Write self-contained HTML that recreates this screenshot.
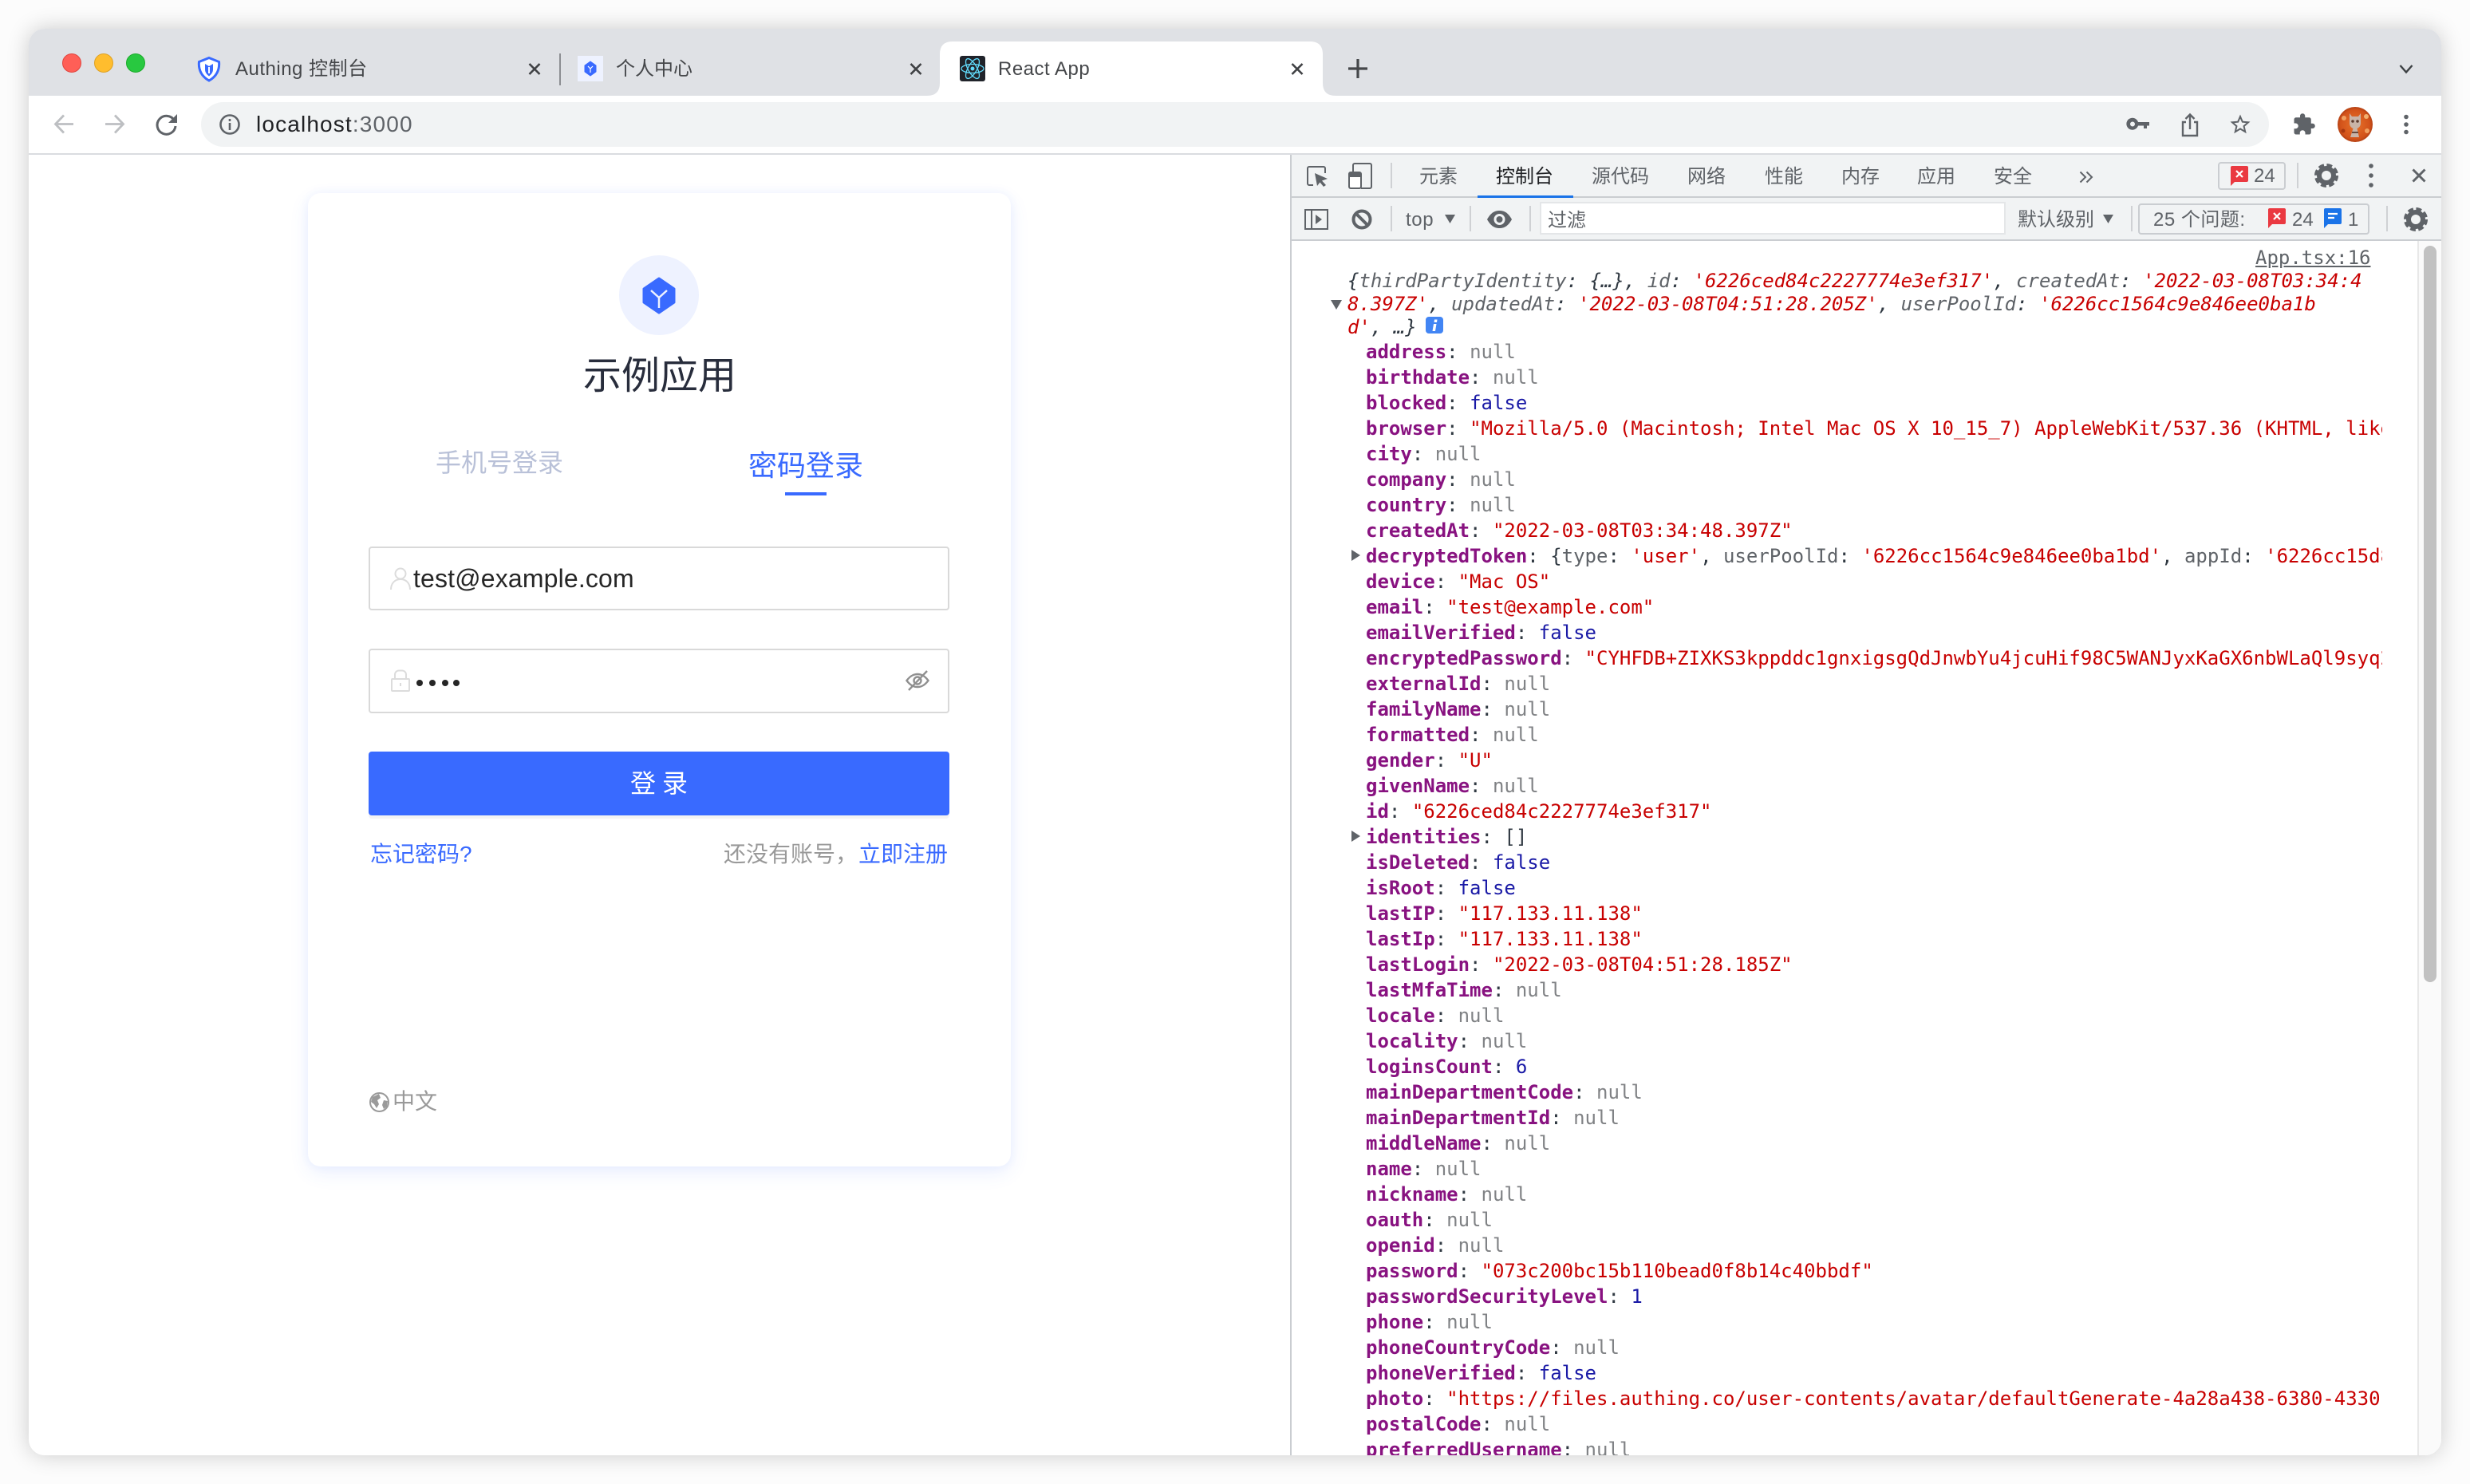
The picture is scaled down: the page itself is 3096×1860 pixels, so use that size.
<!DOCTYPE html>
<html><head><meta charset="utf-8"><title>React App</title>
<style>
*{box-sizing:border-box}
html,body{margin:0;padding:0;width:3096px;height:1860px;overflow:hidden;background:#fcfcfc}
body{font-family:"Liberation Sans","Noto Sans CJK SC",sans-serif;position:relative}
#w{position:absolute;left:36px;top:36px;width:3024px;height:1788px;border-radius:20px;box-shadow:0 0 28px rgba(0,0,0,.2)}
#c{position:absolute;left:0;top:0;width:3096px;height:1860px;clip-path:inset(36px 36px 36px 36px round 20px)}
.a{position:absolute}
.t{position:absolute;white-space:nowrap;line-height:40px;height:40px}
svg{position:absolute;overflow:visible}
.tb{color:#5f6368;font-size:24px}
.sep{position:absolute;width:2px;background:#cfd1d4}
#rows{position:absolute;left:1712px;top:425px;width:1274px;height:1400px;overflow:hidden;font:24px/32px "DejaVu Sans Mono","Liberation Mono",monospace;color:#303942}
#rows div{height:32px;white-space:nowrap;overflow:hidden}
.k{color:#881280;font-weight:bold}.n{color:#808285}.s{color:#c80000}.b{color:#1a1aa6}.g{color:#5f6368}
.h{position:absolute;left:1689px;font:italic 24px/29px "DejaVu Sans Mono","Liberation Mono",monospace;color:#303942;white-space:nowrap}
</style></head><body>
<div id="w"></div>
<div id="c">
<!-- frame -->
<div class="a" style="left:36px;top:36px;width:3024px;height:84px;background:#dfe1e5"></div>
<div class="a" style="left:36px;top:120px;width:3024px;height:72px;background:#fff"></div>
<div class="a" style="left:36px;top:192px;width:3024px;height:2px;background:#dadce0"></div>
<div class="a" style="left:36px;top:194px;width:3024px;height:1630px;background:#fff"></div>
<div class="a" style="left:252px;top:128px;width:2592px;height:56px;background:#f1f3f4;border-radius:28px"></div>

<!-- lights -->
<div class="a" style="left:78px;top:67px;width:24px;height:24px;border-radius:50%;background:#ff5f57;border:1px solid #e0443e"></div>
<div class="a" style="left:118px;top:67px;width:24px;height:24px;border-radius:50%;background:#ffbd2e;border:1px solid #dea123"></div>
<div class="a" style="left:158px;top:67px;width:24px;height:24px;border-radius:50%;background:#28c840;border:1px solid #1aab29"></div>

<!-- tab 1 -->
<svg style="left:247px;top:71px" width="30" height="31" viewBox="0 0 30 31"><path d="M15 1.500L27.500 6.500C28.500 16 24.500 25 15 30C5.500 25 1.500 16 2.500 6.500Z" fill="#fff" stroke="#396aff" stroke-width="3"/><path d="M10 9L15 12L20 9V16C20 20 17.500 22.500 15 24.500C12.500 22.500 10 20 10 16Z" fill="#396aff"/><path d="M15 13V21" stroke="#fff" stroke-width="2"/></svg>
<div class="t" style="left:295px;top:67px;font-size:24px;color:#45474a;letter-spacing:.5px">Authing 控制台</div>
<svg style="left:662px;top:79px" width="16" height="15" viewBox="0 0 16 15"><path d="M1.500 1L14.500 14M14.500 1L1.500 14" stroke="#3f4144" stroke-width="2.600"/></svg>
<div class="a" style="left:701px;top:67px;width:2px;height:40px;background:#8c8e92"></div>
<!-- tab 2 -->
<div class="a" style="left:724px;top:70px;width:32px;height:32px;background:#eef2ff"></div>
<svg style="left:732px;top:76px" width="16" height="20" viewBox="0 0 16 20"><path d="M8 1L15 6V14L8 19L1 14V6Z" fill="#396aff" stroke="#396aff" stroke-linejoin="round"/><path d="M5 7L8 10L11 7M8 10V15" fill="none" stroke="#fff" stroke-width="1.200"/></svg>
<div class="t" style="left:772px;top:67px;font-size:24px;color:#45474a">个人中心</div>
<svg style="left:1140px;top:79px" width="16" height="15" viewBox="0 0 16 15"><path d="M1.500 1L14.500 14M14.500 1L1.500 14" stroke="#3f4144" stroke-width="2.600"/></svg>
<!-- active tab -->
<svg style="left:0;top:0" width="1700" height="130"><path d="M1162 120Q1178 120 1178 104V68Q1178 52 1194 52H1642Q1658 52 1658 68V104Q1658 120 1674 120Z" fill="#fff"/></svg>
<svg style="left:1203px;top:70px" width="32" height="32" viewBox="0 0 32 32"><rect width="32" height="32" rx="3" fill="#20232a"/><g fill="none" stroke="#61dafb" stroke-width="1.300"><ellipse cx="16" cy="16" rx="14" ry="5.500"/><ellipse cx="16" cy="16" rx="14" ry="5.500" transform="rotate(60 16 16)"/><ellipse cx="16" cy="16" rx="14" ry="5.500" transform="rotate(120 16 16)"/></g><circle cx="16" cy="16" r="2.500" fill="#61dafb"/></svg>
<div class="t" style="left:1251px;top:67px;font-size:24px;color:#45474a;letter-spacing:.5px">React App</div>
<svg style="left:1618px;top:79px" width="16" height="15" viewBox="0 0 16 15"><path d="M1.500 1L14.500 14M14.500 1L1.500 14" stroke="#3f4144" stroke-width="2.600"/></svg>
<svg style="left:1690px;top:74px" width="24" height="24" viewBox="0 0 24 24"><path d="M12 0V24M0 12H24" stroke="#45474a" stroke-width="3.200"/></svg>
<svg style="left:3007px;top:81px" width="18" height="11" viewBox="0 0 18 11"><path d="M1.500 1L9 9.500L16.500 1" fill="none" stroke="#3c4043" stroke-width="2.400"/></svg>

<!-- nav -->
<svg style="left:67px;top:143px" width="26" height="25" viewBox="0 0 26 25"><path d="M25 12.500H3M13 1.500L2.500 12.500L13 23.500" fill="none" stroke="#bdbfc2" stroke-width="2.800"/></svg>
<svg style="left:131px;top:143px" width="26" height="25" viewBox="0 0 26 25"><path d="M1 12.500H23M13 1.500L23.500 12.500L13 23.500" fill="none" stroke="#bdbfc2" stroke-width="2.800"/></svg>
<svg style="left:195px;top:143px" width="28" height="26" viewBox="0 0 28 26"><path d="M23.500 8A11.500 11.500 0 1 0 25 15" fill="none" stroke="#5f6368" stroke-width="3"/><path d="M27 0V11H16Z" fill="#5f6368"/></svg>
<svg style="left:275px;top:143px" width="26" height="26" viewBox="0 0 26 26"><circle cx="13" cy="13" r="11.500" fill="none" stroke="#5f6368" stroke-width="2.600"/><rect x="11.700" y="6" width="2.600" height="3" fill="#5f6368"/><rect x="11.700" y="11" width="2.600" height="9" fill="#5f6368"/></svg>
<div class="t" style="left:321px;top:136px;font-size:28px;color:#202124;letter-spacing:1.15px">localhost<span style="color:#5f6368">:3000</span></div>
<svg style="left:2666px;top:147px" width="28" height="18" viewBox="0 0 28 18"><path d="M14 6H28V10.500H25V14H21V10.500H14A7.500 7.500 0 1 1 14 6ZM7 5.500A3 3 0 1 0 7 11.500A3 3 0 1 0 7 5.500Z" fill="#5f6368" fill-rule="evenodd"/></svg>
<svg style="left:2733px;top:142px" width="24" height="30" viewBox="0 0 24 30"><path d="M7 11H3V28H21V11H17M12 20V2M6.500 7L12 1.500L17.500 7" fill="none" stroke="#5f6368" stroke-width="2.400"/></svg>
<svg style="left:2793px;top:141px" width="30" height="30" viewBox="0 0 24 24"><path d="M22 9.240l-7.190-.62L12 2 9.190 8.630 2 9.240l5.460 4.730L5.820 21 12 17.270 18.180 21l-1.630-7.030L22 9.240zM12 15.400l-3.760 2.270 1-4.280-3.320-2.880 4.380-.38L12 6.100l1.710 4.040 4.380.38-3.320 2.880 1 4.280L12 15.400z" fill="#5f6368"/></svg>
<svg style="left:2873px;top:141px" width="30" height="30" viewBox="0 0 24 24"><path d="M20.500 11H19V7c0-1.100-.9-2-2-2h-4V3.500C13 2.120 11.880 1 10.500 1S8 2.120 8 3.500V5H4c-1.100 0-1.990.9-1.990 2v3.800H3.500c1.490 0 2.700 1.210 2.700 2.700s-1.210 2.700-2.700 2.700H2V20c0 1.100.9 2 2 2h3.800v-1.500c0-1.490 1.210-2.700 2.700-2.700 1.490 0 2.700 1.210 2.700 2.700V22H17c1.100 0 2-.9 2-2v-4h1.500c1.380 0 2.500-1.120 2.500-2.500S21.880 11 20.500 11z" fill="#5f6368"/></svg>
<svg style="left:2930px;top:134px" width="44" height="44" viewBox="0 0 44 44"><defs><radialGradient id="av" cx=".5" cy=".5" r=".6"><stop offset="0" stop-color="#e8732a"/><stop offset=".7" stop-color="#d2521a"/><stop offset="1" stop-color="#8f2c0c"/></radialGradient></defs><circle cx="22" cy="22" r="22" fill="url(#av)"/><circle cx="8" cy="14" r="3" fill="#f0a060"/><circle cx="36" cy="12" r="3" fill="#f2b070"/><circle cx="37" cy="30" r="3" fill="#f0a060"/><circle cx="7" cy="30" r="2.500" fill="#a83810"/><path d="M15 8L18 12H26L29 8V20C29 24 27 26 24.500 27L27 38H16L19.500 27C17 26 15 24 15 20Z" fill="#c9b4a8"/><circle cx="19" cy="18" r="1.800" fill="#5b3a2e"/><circle cx="25" cy="18" r="1.800" fill="#5b3a2e"/><path d="M18 32H26" stroke="#6a4a3c" stroke-width="2"/></svg>
<svg style="left:3011px;top:143px" width="10" height="26" viewBox="0 0 10 26"><circle cx="5" cy="3.500" r="2.800" fill="#5f6368"/><circle cx="5" cy="13" r="2.800" fill="#5f6368"/><circle cx="5" cy="22.500" r="2.800" fill="#5f6368"/></svg>

<!-- login card -->
<div class="a" style="left:386px;top:242px;width:881px;height:1220px;background:#fff;border-radius:16px;box-shadow:0 0 12px rgba(57,106,255,.06),0 8px 24px rgba(57,106,255,.1)"></div>
<div class="a" style="left:776px;top:320px;width:100px;height:100px;border-radius:50%;background:#eef2ff"></div>
<svg style="left:805px;top:347px" width="42" height="47" viewBox="0 0 42 47"><path d="M21 2L40 15V32L21 45L2 32V15Z" fill="#396aff" stroke="#396aff" stroke-width="3" stroke-linejoin="round"/><path d="M11 17L21 26L31 17M21 26V39" fill="none" stroke="#eef2ff" stroke-width="2.500"/></svg>
<div class="t" style="left:731px;top:442px;height:60px;line-height:60px;font-size:48px;color:#282d3c">示例应用</div>
<div class="t" style="left:546px;top:560px;font-size:32px;color:#b9c1d8">手机号登录</div>
<div class="t" style="left:938px;top:564px;font-size:36px;color:#396aff">密码登录</div>
<div class="a" style="left:984px;top:617px;width:52px;height:4px;background:#396aff"></div>

<div class="a" style="left:462px;top:685px;width:728px;height:80px;border:2px solid #d9d9d9;border-radius:4px;background:#fff"></div>
<svg style="left:489px;top:711px" width="26" height="28" viewBox="0 0 26 28"><circle cx="13" cy="8" r="6.500" fill="none" stroke="#dcdcdc" stroke-width="2"/><path d="M1 28C1 20 6 15 13 15C20 15 25 20 25 28" fill="none" stroke="#dcdcdc" stroke-width="2"/></svg>
<div class="t" style="left:518px;top:705px;font-size:32px;color:#262626;letter-spacing:.15px">test@example.com</div>

<div class="a" style="left:462px;top:813px;width:728px;height:81px;border:2px solid #d9d9d9;border-radius:4px;background:#fff"></div>
<svg style="left:490px;top:839px" width="24" height="28" viewBox="0 0 24 28"><path d="M5 12V6.500A5 5 0 0 1 10 1.500H14A5 5 0 0 1 19 6.500V12" fill="none" stroke="#dcdcdc" stroke-width="2"/><rect x="1" y="12" width="22" height="15" rx="1" fill="none" stroke="#dcdcdc" stroke-width="2"/><path d="M12 17V21" stroke="#dcdcdc" stroke-width="2"/></svg>
<div class="a" style="left:522px;top:852px;width:8px;height:8px;border-radius:50%;background:#262626"></div>
<div class="a" style="left:538px;top:852px;width:8px;height:8px;border-radius:50%;background:#262626"></div>
<div class="a" style="left:554px;top:852px;width:8px;height:8px;border-radius:50%;background:#262626"></div>
<div class="a" style="left:568px;top:852px;width:8px;height:8px;border-radius:50%;background:#262626"></div>
<svg style="left:1135px;top:840px" width="30" height="26" viewBox="0 0 30 26"><path d="M1.500 13C6 7 10 5 15 5C20 5 24 7 28.500 13C24 19 20 21 15 21C10 21 6 19 1.500 13Z" fill="none" stroke="#8f8f8f" stroke-width="2.400"/><circle cx="15" cy="13" r="4.500" fill="none" stroke="#8f8f8f" stroke-width="2.400"/><path d="M4 25L27 1" stroke="#8f8f8f" stroke-width="2.400"/></svg>

<div class="a" style="left:462px;top:942px;width:728px;height:84px;border-radius:4px;background:#f4f4f4"></div>
<div class="a" style="left:462px;top:942px;width:728px;height:80px;border-radius:4px;background:#396aff"></div>
<div class="t" style="left:790px;top:962px;font-size:32px;color:#fff;letter-spacing:8px">登录</div>
<div class="t" style="left:464px;top:1051px;font-size:28px;color:#396aff">忘记密码?</div>
<div class="t" style="left:907px;top:1051px;font-size:28px;color:#999">还没有账号，</div>
<div class="t" style="left:1076px;top:1051px;font-size:28px;color:#396aff">立即注册</div>
<svg style="left:463px;top:1369px" width="25" height="25" viewBox="0 0 25 25"><circle cx="12.500" cy="12.500" r="11.500" fill="#fff" stroke="#9a9a9a" stroke-width="2"/><path d="M4 6L12 2L14 7L10 10L12 15L9 20L6 15L2 12ZM18 10L23 11L22 18L18 21L16 16Z" fill="#9a9a9a"/></svg>
<div class="t" style="left:492px;top:1361px;font-size:28px;color:#999">中文</div>

<!-- devtools -->
<div class="a" style="left:1617px;top:194px;width:1443px;height:1630px;background:#fff;border-left:2px solid #cacdd1"></div>
<div class="a" style="left:1619px;top:194px;width:1441px;height:52px;background:#f1f3f4"></div>
<div class="a" style="left:1619px;top:246px;width:1441px;height:2px;background:#cacdd1"></div>
<div class="a" style="left:1619px;top:248px;width:1441px;height:52px;background:#f1f3f4"></div>
<div class="a" style="left:1619px;top:300px;width:1441px;height:2px;background:#cacdd1"></div>

<svg style="left:1638px;top:208px" width="27" height="26" viewBox="0 0 27 26"><path d="M8 24H3A2 2 0 0 1 1 22V3A2 2 0 0 1 3 1H21A2 2 0 0 1 23 3V9" fill="none" stroke="#5f6368" stroke-width="2"/><path d="M10 9L26 16L19 18.500L24 24L21 26L16.500 20.500L13 25Z" fill="#5f6368"/></svg>
<svg style="left:1690px;top:204px" width="30" height="33" viewBox="0 0 30 33"><path d="M6 12V3A2 2 0 0 1 8 1H27A2 2 0 0 1 29 3V30A2 2 0 0 1 27 32H16" fill="none" stroke="#5f6368" stroke-width="2"/><rect x="1" y="12" width="15" height="20" rx="2" fill="#fff" stroke="#5f6368" stroke-width="2"/><rect x="1" y="12" width="15" height="6" fill="#5f6368"/></svg>
<div class="sep" style="left:1743px;top:204px;height:32px"></div>
<div class="t tb" style="left:1779px;top:202px">元素</div>
<div class="t" style="left:1875px;top:202px;font-size:24px;color:#202124">控制台</div>
<div class="a" style="left:1852px;top:245px;width:120px;height:3px;background:#1a73e8"></div>
<div class="t tb" style="left:1995px;top:202px">源代码</div>
<div class="t tb" style="left:2115px;top:202px">网络</div>
<div class="t tb" style="left:2212px;top:202px">性能</div>
<div class="t tb" style="left:2308px;top:202px">内存</div>
<div class="t tb" style="left:2403px;top:202px">应用</div>
<div class="t tb" style="left:2499px;top:202px">安全</div>
<svg style="left:2606px;top:214px" width="18" height="16" viewBox="0 0 18 16"><path d="M1.500 1.500L8 8L1.500 14.500M9.500 1.500L16 8L9.500 14.500" fill="none" stroke="#5f6368" stroke-width="2"/></svg>
<div class="a" style="left:2780px;top:203px;width:85px;height:35px;border:2px solid #cacdd1;border-radius:4px"></div>
<svg style="left:2796px;top:208px" width="22" height="25" viewBox="0 0 22 25"><path d="M2 0H20A2 2 0 0 1 22 2V18A2 2 0 0 1 20 20H5L0 25V2A2 2 0 0 1 2 0Z" fill="#ea3941"/><path d="M7 6L15 14M15 6L7 14" stroke="#fff" stroke-width="2.200"/></svg>
<div class="t" style="left:2825px;top:201px;font-size:24px;color:#5f6368">24</div>
<div class="sep" style="left:2879px;top:204px;height:32px"></div>
<svg style="left:2901px;top:205px" width="30" height="30" viewBox="0 0 30 30"><circle cx="15" cy="15" r="9" fill="none" stroke="#5f6368" stroke-width="6"/><circle cx="15" cy="15" r="12.500" fill="none" stroke="#5f6368" stroke-width="5" stroke-dasharray="6.500 3.320"/></svg>
<svg style="left:2967px;top:204px" width="10" height="32" viewBox="0 0 10 32"><circle cx="5" cy="4" r="2.800" fill="#5f6368"/><circle cx="5" cy="16" r="2.800" fill="#5f6368"/><circle cx="5" cy="28" r="2.800" fill="#5f6368"/></svg>
<svg style="left:3023px;top:211px" width="18" height="18" viewBox="0 0 18 18"><path d="M1.500 1.500L16.500 16.500M16.500 1.500L1.500 16.500" stroke="#5f6368" stroke-width="3"/></svg>

<svg style="left:1635px;top:262px" width="30" height="26" viewBox="0 0 30 26"><rect x="1" y="1" width="28" height="24" fill="none" stroke="#5f6368" stroke-width="2"/><path d="M9 1V25" stroke="#5f6368" stroke-width="2"/><path d="M14 7L22 13L14 19Z" fill="#5f6368"/></svg>
<svg style="left:1694px;top:262px" width="26" height="26" viewBox="0 0 26 26"><circle cx="13" cy="13" r="10.500" fill="none" stroke="#5f6368" stroke-width="4"/><path d="M5.500 5.500L20.500 20.500" stroke="#5f6368" stroke-width="4"/></svg>
<div class="sep" style="left:1743px;top:258px;height:32px"></div>
<div class="t" style="left:1762px;top:256px;font-size:24px;color:#5f6368;letter-spacing:.6px">top</div>
<svg style="left:1811px;top:269px" width="13" height="11" viewBox="0 0 13 11"><path d="M0 0H13L6.500 11Z" fill="#5f6368"/></svg>
<div class="sep" style="left:1842px;top:258px;height:32px"></div>
<svg style="left:1864px;top:263px" width="31" height="24" viewBox="0 0 31 24"><path d="M0 12C5 3 10 1 15.500 1C21 1 26 3 31 12C26 21 21 23 15.500 23C10 23 5 21 0 12Z" fill="#5f6368"/><circle cx="15.500" cy="12" r="7" fill="#f1f3f4"/><circle cx="15.500" cy="12" r="4" fill="#5f6368"/></svg>
<div class="sep" style="left:1917px;top:258px;height:32px"></div>
<div class="a" style="left:1930px;top:253px;width:584px;height:41px;background:#fff;border:2px solid #e4e6e8"></div>
<div class="t" style="left:1940px;top:257px;font-size:24px;color:#5f6368">过滤</div>
<div class="t" style="left:2529px;top:256px;font-size:24px;color:#5f6368">默认级别</div>
<svg style="left:2636px;top:269px" width="13" height="11" viewBox="0 0 13 11"><path d="M0 0H13L6.500 11Z" fill="#5f6368"/></svg>
<div class="sep" style="left:2671px;top:258px;height:32px"></div>
<div class="a" style="left:2680px;top:255px;width:290px;height:39px;border:2px solid #cacdd1;border-radius:4px"></div>
<div class="t" style="left:2699px;top:256px;font-size:24px;color:#5f6368;letter-spacing:.5px">25 个问题:</div>
<svg style="left:2843px;top:261px" width="22" height="25" viewBox="0 0 22 25"><path d="M2 0H20A2 2 0 0 1 22 2V18A2 2 0 0 1 20 20H5L0 25V2A2 2 0 0 1 2 0Z" fill="#ea3941"/><path d="M7 6L15 14M15 6L7 14" stroke="#fff" stroke-width="2.200"/></svg>
<div class="t" style="left:2873px;top:256px;font-size:24px;color:#5f6368">24</div>
<svg style="left:2913px;top:261px" width="22" height="25" viewBox="0 0 22 25"><path d="M2 0H20A2 2 0 0 1 22 2V18A2 2 0 0 1 20 20H5L0 25V2A2 2 0 0 1 2 0Z" fill="#1a73e8"/><path d="M5 7H17M5 12H13" stroke="#fff" stroke-width="2.200"/></svg>
<div class="t" style="left:2943px;top:256px;font-size:24px;color:#5f6368">1</div>
<div class="sep" style="left:2991px;top:258px;height:32px"></div>
<svg style="left:3013px;top:260px" width="30" height="30" viewBox="0 0 30 30"><circle cx="15" cy="15" r="9" fill="none" stroke="#5f6368" stroke-width="6"/><circle cx="15" cy="15" r="12.500" fill="none" stroke="#5f6368" stroke-width="5" stroke-dasharray="6.500 3.320"/></svg>

<!-- scrollbar -->
<div class="a" style="left:3030px;top:302px;width:30px;height:1522px;background:#fafafa;border-left:2px solid #e8e8e8"></div>
<div class="a" style="left:3038px;top:308px;width:16px;height:923px;background:#c1c1c1;border-radius:8px"></div>

<!-- console -->
<div class="a" style="left:2827px;top:307px;font:24px/32px 'DejaVu Sans Mono','Liberation Mono',monospace;color:#5f6368;text-decoration:underline;white-space:nowrap">App.tsx:16</div>
<div class="h" style="top:338px">{<span class="g">thirdPartyIdentity</span>: {…}, <span class="g">id</span>: <span class="s">'6226ced84c2227774e3ef317'</span>, <span class="g">createdAt</span>: <span class="s">'2022-03-08T03:34:4</span></div>
<div class="h" style="top:367px"><span class="s">8.397Z'</span>, <span class="g">updatedAt</span>: <span class="s">'2022-03-08T04:51:28.205Z'</span>, <span class="g">userPoolId</span>: <span class="s">'6226cc1564c9e846ee0ba1b</span></div>
<div class="h" style="top:396px"><span class="s">d'</span>, …}</div>
<svg style="left:1668px;top:376px" width="14" height="12" viewBox="0 0 14 12"><path d="M0 0H14L7 12Z" fill="#5f6368"/></svg>
<svg style="left:1787px;top:397px" width="22" height="21" viewBox="0 0 22 21"><rect width="22" height="21" rx="4" fill="#4285f4"/><path d="M11 3.500H14.500L14 7H10.500ZM10 9H13.500L12 18H8.500Z" fill="#fff"/></svg>
<svg style="left:1694px;top:689px" width="11" height="14" viewBox="0 0 11 14"><path d="M0 0L11 7L0 14Z" fill="#5f6368"/></svg>
<svg style="left:1694px;top:1041px" width="11" height="14" viewBox="0 0 11 14"><path d="M0 0L11 7L0 14Z" fill="#5f6368"/></svg>
<div id="rows">
<div><span class="k">address</span>: <span class="n">null</span></div>
<div><span class="k">birthdate</span>: <span class="n">null</span></div>
<div><span class="k">blocked</span>: <span class="b">false</span></div>
<div><span class="k">browser</span>: <span class="s">"Mozilla/5.0 (Macintosh; Intel Mac OS X 10_15_7) AppleWebKit/537.36 (KHTML, like Gecko) Chrome/99.0</span></div>
<div><span class="k">city</span>: <span class="n">null</span></div>
<div><span class="k">company</span>: <span class="n">null</span></div>
<div><span class="k">country</span>: <span class="n">null</span></div>
<div><span class="k">createdAt</span>: <span class="s">"2022-03-08T03:34:48.397Z"</span></div>
<div><span class="k">decryptedToken</span>: {<span class="g">type</span>: <span class="s">'user'</span>, <span class="g">userPoolId</span>: <span class="s">'6226cc1564c9e846ee0ba1bd'</span>, <span class="g">appId</span>: <span class="s">'6226cc15d8c9e846ee0ba1bd'</span></div>
<div><span class="k">device</span>: <span class="s">"Mac OS"</span></div>
<div><span class="k">email</span>: <span class="s">"test@example.com"</span></div>
<div><span class="k">emailVerified</span>: <span class="b">false</span></div>
<div><span class="k">encryptedPassword</span>: <span class="s">"CYHFDB+ZIXKS3kppddc1gnxigsgQdJnwbYu4jcuHif98C5WANJyxKaGX6nbWLaQl9syq2Zx8pQ</span></div>
<div><span class="k">externalId</span>: <span class="n">null</span></div>
<div><span class="k">familyName</span>: <span class="n">null</span></div>
<div><span class="k">formatted</span>: <span class="n">null</span></div>
<div><span class="k">gender</span>: <span class="s">"U"</span></div>
<div><span class="k">givenName</span>: <span class="n">null</span></div>
<div><span class="k">id</span>: <span class="s">"6226ced84c2227774e3ef317"</span></div>
<div><span class="k">identities</span>: []</div>
<div><span class="k">isDeleted</span>: <span class="b">false</span></div>
<div><span class="k">isRoot</span>: <span class="b">false</span></div>
<div><span class="k">lastIP</span>: <span class="s">"117.133.11.138"</span></div>
<div><span class="k">lastIp</span>: <span class="s">"117.133.11.138"</span></div>
<div><span class="k">lastLogin</span>: <span class="s">"2022-03-08T04:51:28.185Z"</span></div>
<div><span class="k">lastMfaTime</span>: <span class="n">null</span></div>
<div><span class="k">locale</span>: <span class="n">null</span></div>
<div><span class="k">locality</span>: <span class="n">null</span></div>
<div><span class="k">loginsCount</span>: <span class="b">6</span></div>
<div><span class="k">mainDepartmentCode</span>: <span class="n">null</span></div>
<div><span class="k">mainDepartmentId</span>: <span class="n">null</span></div>
<div><span class="k">middleName</span>: <span class="n">null</span></div>
<div><span class="k">name</span>: <span class="n">null</span></div>
<div><span class="k">nickname</span>: <span class="n">null</span></div>
<div><span class="k">oauth</span>: <span class="n">null</span></div>
<div><span class="k">openid</span>: <span class="n">null</span></div>
<div><span class="k">password</span>: <span class="s">"073c200bc15b110bead0f8b14c40bbdf"</span></div>
<div><span class="k">passwordSecurityLevel</span>: <span class="b">1</span></div>
<div><span class="k">phone</span>: <span class="n">null</span></div>
<div><span class="k">phoneCountryCode</span>: <span class="n">null</span></div>
<div><span class="k">phoneVerified</span>: <span class="b">false</span></div>
<div><span class="k">photo</span>: <span class="s">"https://files.authing.co/user-contents/avatar/defaultGenerate-4a28a438-6380-4330-</span></div>
<div><span class="k">postalCode</span>: <span class="n">null</span></div>
<div><span class="k">preferredUsername</span>: <span class="n">null</span></div>
</div>
</div>
</body></html>
